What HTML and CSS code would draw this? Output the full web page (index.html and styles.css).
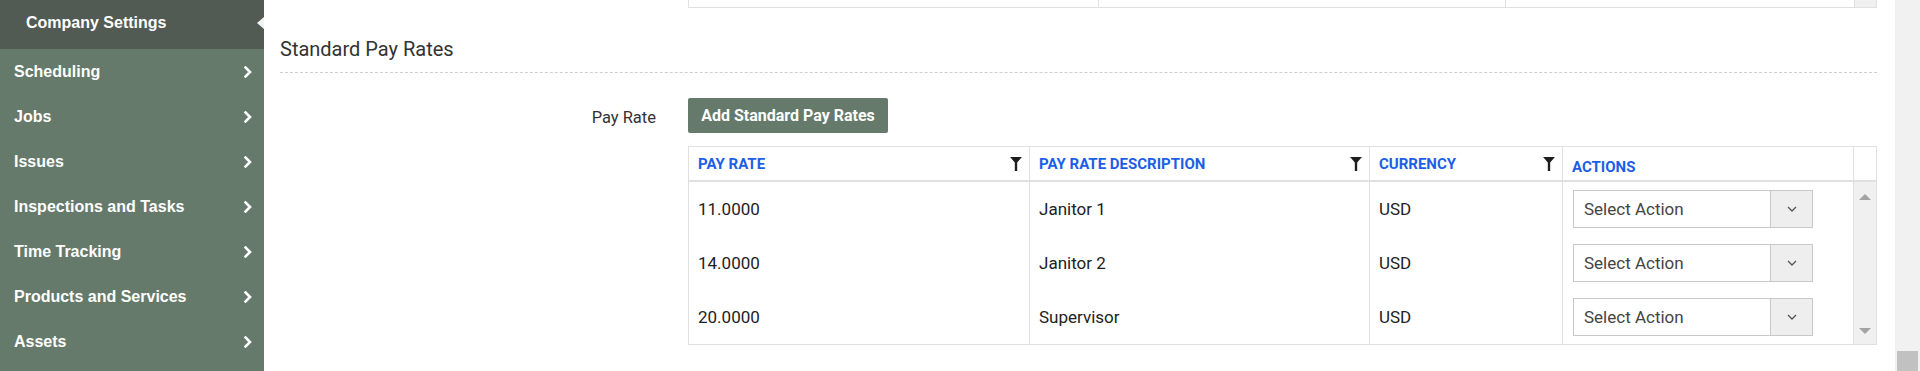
FILE: index.html
```html
<!DOCTYPE html>
<html>
<head>
<meta charset="utf-8">
<link rel="stylesheet" href="styles.css">
</head>
<body>
<div class="page">
  <aside class="sidebar">
    <div class="side-current">Company Settings<span class="notch"></span></div>
    <nav class="side-nav">
      <a class="side-item">Scheduling<svg class="chev" viewBox="0 0 8 12" width="8" height="12"><polyline points="1.5,1.5 6,6 1.5,10.5" /></svg></a>
      <a class="side-item">Jobs<svg class="chev" viewBox="0 0 8 12" width="8" height="12"><polyline points="1.5,1.5 6,6 1.5,10.5" /></svg></a>
      <a class="side-item">Issues<svg class="chev" viewBox="0 0 8 12" width="8" height="12"><polyline points="1.5,1.5 6,6 1.5,10.5" /></svg></a>
      <a class="side-item">Inspections and Tasks<svg class="chev" viewBox="0 0 8 12" width="8" height="12"><polyline points="1.5,1.5 6,6 1.5,10.5" /></svg></a>
      <a class="side-item">Time Tracking<svg class="chev" viewBox="0 0 8 12" width="8" height="12"><polyline points="1.5,1.5 6,6 1.5,10.5" /></svg></a>
      <a class="side-item">Products and Services<svg class="chev" viewBox="0 0 8 12" width="8" height="12"><polyline points="1.5,1.5 6,6 1.5,10.5" /></svg></a>
      <a class="side-item">Assets<svg class="chev" viewBox="0 0 8 12" width="8" height="12"><polyline points="1.5,1.5 6,6 1.5,10.5" /></svg></a>
    </nav>
  </aside>

  <main class="content">
    <div class="prev-grid">
      <div class="prev-cell c1"></div>
      <div class="prev-cell c2"></div>
      <div class="prev-cell c3"></div>
      <div class="prev-scroll"></div>
    </div>

    <h2 class="section-title">Standard Pay Rates</h2>

    <div class="form-row">
      <label class="form-label">Pay Rate</label>
      <div class="form-control">
        <button class="btn-primary">Add Standard Pay Rates</button>

        <div class="grid">
          <div class="grid-head">
            <div class="th"><span>PAY RATE</span><svg class="funnel" viewBox="0 0 11 13" width="12" height="14"><polygon points="0,0 11,0 6.6,5 6.6,13 4.4,13 4.4,5" /></svg></div>
            <div class="th"><span>PAY RATE DESCRIPTION</span><svg class="funnel" viewBox="0 0 11 13" width="12" height="14"><polygon points="0,0 11,0 6.6,5 6.6,13 4.4,13 4.4,5" /></svg></div>
            <div class="th"><span>CURRENCY</span><svg class="funnel" viewBox="0 0 11 13" width="12" height="14"><polygon points="0,0 11,0 6.6,5 6.6,13 4.4,13 4.4,5" /></svg></div>
            <div class="th th-actions"><span>ACTIONS</span></div>
            <div class="th th-scroll"></div>
          </div>
          <div class="grid-body">
            <div class="rows">
              <div class="row">
                <div class="td">11.0000</div>
                <div class="td">Janitor 1</div>
                <div class="td">USD</div>
                <div class="td td-actions">
                  <div class="select"><span class="select-text">Select Action</span><span class="select-btn"><svg viewBox="0 0 10 6" width="10" height="6"><polyline points="1,1 5,5 9,1" /></svg></span></div>
                </div>
              </div>
              <div class="row">
                <div class="td">14.0000</div>
                <div class="td">Janitor 2</div>
                <div class="td">USD</div>
                <div class="td td-actions">
                  <div class="select"><span class="select-text">Select Action</span><span class="select-btn"><svg viewBox="0 0 10 6" width="10" height="6"><polyline points="1,1 5,5 9,1" /></svg></span></div>
                </div>
              </div>
              <div class="row">
                <div class="td">20.0000</div>
                <div class="td">Supervisor</div>
                <div class="td">USD</div>
                <div class="td td-actions">
                  <div class="select"><span class="select-text">Select Action</span><span class="select-btn"><svg viewBox="0 0 10 6" width="10" height="6"><polyline points="1,1 5,5 9,1" /></svg></span></div>
                </div>
              </div>
            </div>
            <div class="vscroll">
              <svg class="arrow" viewBox="0 0 12 6" width="12" height="6"><polygon points="0,6 6,0 12,6" /></svg>
              <svg class="arrow" viewBox="0 0 12 6" width="12" height="6"><polygon points="0,0 12,0 6,6" /></svg>
            </div>
          </div>
        </div>
      </div>
    </div>
  </main>

  <div class="page-scrollbar"><div class="page-thumb"></div></div>
</div>
</body>
</html>
```

FILE: styles.css
```css
* { box-sizing: border-box; }
html, body { margin: 0; padding: 0; }
body {
  background: #fff;
  font-family: Roboto, "Liberation Sans", sans-serif;
  color: #222;
  height: 371px;
  overflow: hidden;
}
.page {
  display: flex;
  height: 371px;
}

/* Sidebar */
.sidebar {
  width: 264px;
  flex: none;
  background: #657a6b;
  font-family: "Liberation Sans", Arial, sans-serif;
  font-weight: bold;
  font-size: 16px;
  color: #fff;
}
.side-current {
  position: relative;
  height: 49px;
  background: #515a53;
  display: flex;
  align-items: center;
  padding-left: 26px;
  padding-bottom: 3px;
}
.notch {
  position: absolute;
  right: 0;
  top: 17px;
  width: 0;
  height: 0;
  border-top: 6px solid transparent;
  border-bottom: 6px solid transparent;
  border-right: 7px solid #f2f2f2;
}
.side-nav {
  display: flex;
  flex-direction: column;
}
.side-item {
  height: 45px;
  display: flex;
  align-items: center;
  justify-content: space-between;
  padding: 0 12px 0 14px;
}
.chev {
  fill: none;
  stroke: #fff;
  stroke-width: 2.6;
  stroke-linecap: square;
}

/* Content */
.content {
  flex: 1;
  padding: 0 18px 0 16px;
  min-width: 0;
}
.prev-grid {
  margin-left: 408px;
  height: 8px;
  display: grid;
  grid-template-columns: 409px 407px 349px 1fr;
  border: 1px solid #e0e0e0;
  border-top: none;
}
.prev-cell + .prev-cell { border-left: 1px solid #e0e0e0; }
.prev-scroll {
  background: #f0f0f0;
  border-left: 1px solid #e0e0e0;
}
.section-title {
  margin: 29px 0 0;
  font-size: 20px;
  font-weight: 400;
  line-height: 24px;
  color: #333;
  padding-bottom: 11px;
  border-bottom: 1px dashed #cfcfcf;
}
.form-row {
  display: flex;
  align-items: flex-start;
  gap: 32px;
  margin-top: 25px;
}
.form-label {
  width: 376px;
  flex: none;
  text-align: right;
  font-size: 16.5px;
  line-height: 24px;
  padding-top: 8px;
  color: #333;
}
.form-control {
  flex: 1;
  min-width: 0;
}
.btn-primary {
  width: 200px;
  height: 35px;
  background: #657a6b;
  color: #fff;
  border: none;
  border-radius: 2px;
  font-family: Roboto, "Liberation Sans", sans-serif;
  font-weight: bold;
  font-size: 16px;
  padding: 0;
  display: block;
}

/* Grid */
.grid {
  margin-top: 13px;
  border: 1px solid #e0e0e0;
}
.grid-head {
  display: grid;
  grid-template-columns: 340px 340px 193px 291px 1fr;
  height: 35px;
  border-bottom: 2px solid #e0e0e0;
}
.th {
  display: flex;
  align-items: center;
  justify-content: space-between;
  padding: 0 7px 0 9px;
  color: #1d5ee6;
  font-weight: bold;
  font-size: 15px;
  border-left: 1px solid #e0e0e0;
}
.th:first-child { border-left: none; }
.th-actions { padding-top: 6px; }
.funnel { fill: #1e1e1e; }
.grid-body {
  display: flex;
}
.rows {
  width: 1164px;
  flex: none;
}
.row {
  display: grid;
  grid-template-columns: 340px 340px 193px 291px;
  height: 54px;
}
.td {
  display: flex;
  align-items: center;
  padding: 0 9px;
  font-size: 17px;
  color: #222;
  border-left: 1px solid #e0e0e0;
}
.td:first-child { border-left: none; }
.td-actions { padding-left: 10px; }
.select {
  width: 240px;
  height: 38px;
  border: 1px solid #c8c8c8;
  display: flex;
  background: #fff;
}
.select-text {
  flex: 1;
  display: flex;
  align-items: center;
  padding-left: 10px;
  font-size: 17px;
  color: #444;
}
.select-btn {
  width: 42px;
  background: #eeeeee;
  border-left: 1px solid #c8c8c8;
  display: flex;
  align-items: center;
  justify-content: center;
}
.select-btn svg {
  fill: none;
  stroke: #555;
  stroke-width: 1.3;
}
.vscroll {
  flex: 1;
  background: #f0f0f0;
  border-left: 1px solid #e0e0e0;
  display: flex;
  flex-direction: column;
  align-items: center;
  justify-content: space-between;
  padding: 12px 0 10px;
}
.arrow { fill: #a3a3a3; }

/* Page scrollbar */
.page-scrollbar {
  width: 25px;
  flex: none;
  background: #f1f1f1;
  display: flex;
  flex-direction: column;
  justify-content: flex-end;
  padding: 0 2px;
}
.page-thumb {
  height: 20px;
  background: #c1c1c1;
}
```
